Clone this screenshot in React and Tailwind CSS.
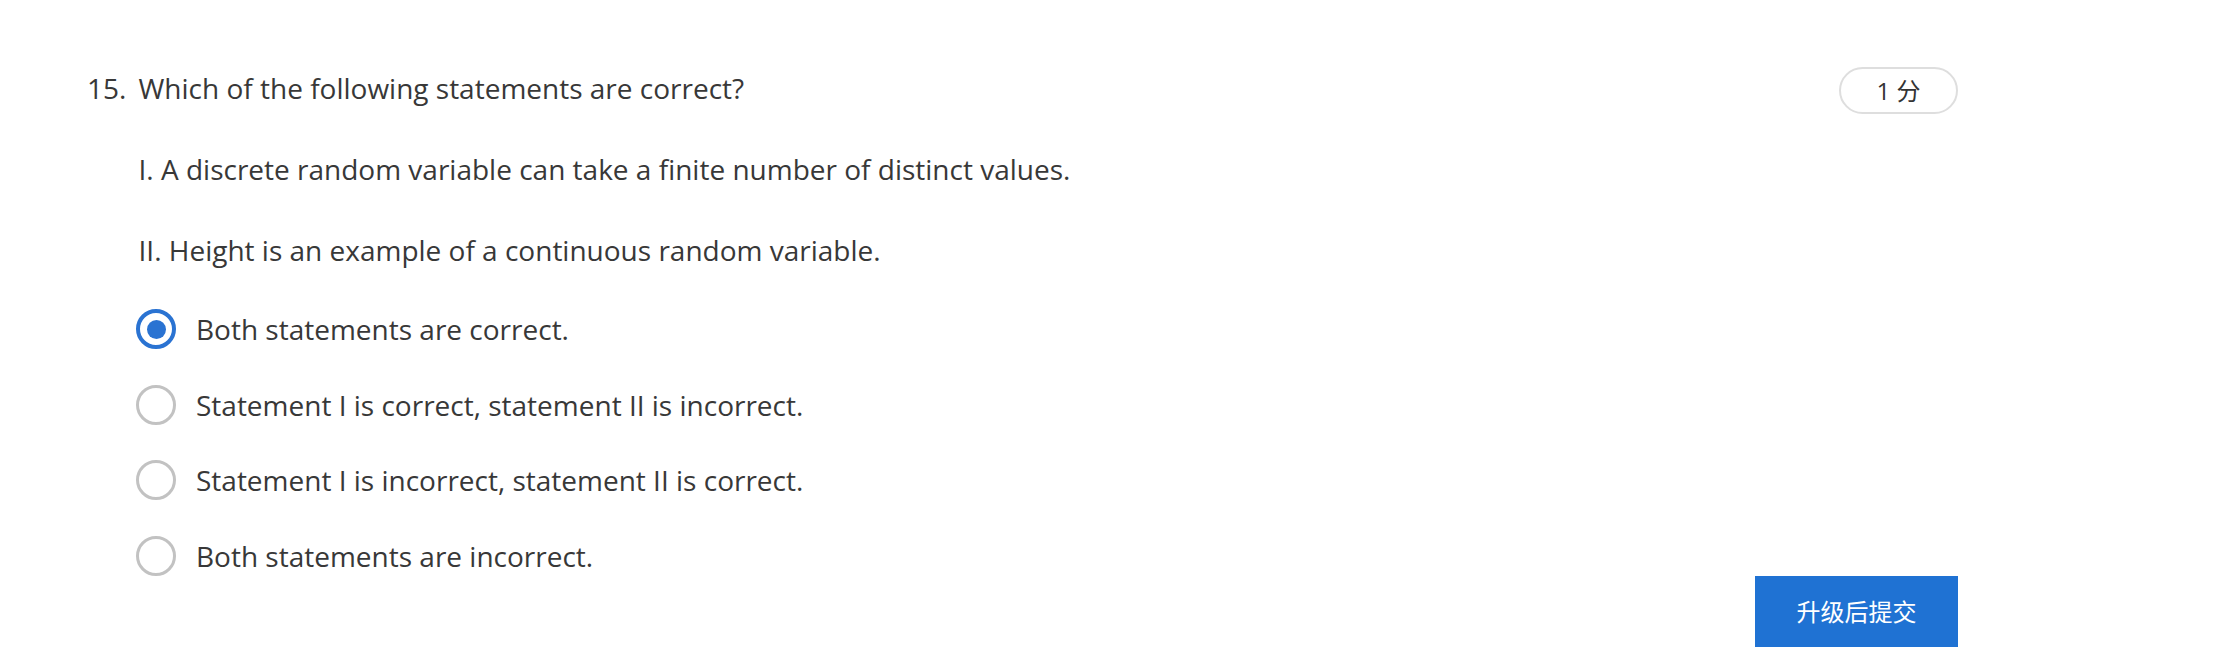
const options = [
    'Both statements are correct.',
    'Statement I is correct, statement II is incorrect.',
    'Statement I is incorrect, statement II is correct.',
    'Both statements are incorrect.',
];

function Radio({ checked }) {
    if (checked) {
        return (
            <span className="flex items-center justify-center w-[40px] h-[40px] rounded-full border-[4px] border-[#2a73d2] shrink-0">
                <span className="w-[19px] h-[19px] rounded-full bg-[#2a73d2]" />
            </span>
        );
    }
    return (
        <span className="block w-[40px] h-[40px] rounded-full border-[3.5px] border-[#c2c2c2] shrink-0" />
    );
}

export default function App() {
    const selected = 0;

    return (
        <div
            className="w-full h-[663px] bg-white text-[#383838] overflow-hidden"
            style={{ fontFamily: '"Open Sans", "Noto Sans CJK SC", sans-serif' }}
        >
            <div className="ml-[87px] w-[1871px] pt-[67px]">
                <div className="flex justify-between items-start">
                    <div className="flex text-[28px] leading-[40px] mt-[1px]">
                        <span className="w-[51.5px]">15.</span>
                        <span>Which of the following statements are correct?</span>
                    </div>
                    <div className="flex items-center justify-center w-[119px] h-[47px] rounded-full border-2 border-[#dedede] text-[24px] text-[#333333]">
                        1 分
                    </div>
                </div>

                <div className="pl-[51.5px] text-[28px] leading-[40px]">
                    <p className="mt-[35px]">
                        I. A discrete random variable can take a finite number of distinct values.
                    </p>
                    <p className="mt-[41px]">II. Height is an example of a continuous random variable.</p>
                </div>

                <div className="pl-[49px] mt-[39px] flex flex-col gap-[35.7px]">
                    {options.map((text, i) => (
                        <label key={i} className="flex items-center gap-[20px] h-[40px] cursor-pointer">
                            <Radio checked={i === selected} />
                            <span className="text-[28px] leading-[40px]">{text}</span>
                        </label>
                    ))}
                </div>

                <div className="flex justify-end">
                    <button className="w-[203px] h-[71px] bg-[#1f72d3] text-white text-[24px] cursor-pointer">
                        升级后提交
                    </button>
                </div>
            </div>
        </div>
    );
}
